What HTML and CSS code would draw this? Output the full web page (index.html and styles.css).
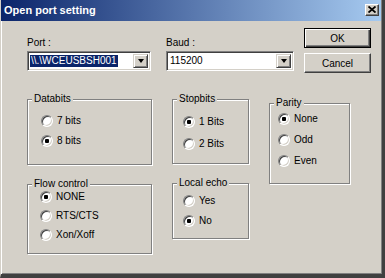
FILE: index.html
```html
<!DOCTYPE html>
<html lang="en">
<head>
  <meta charset="UTF-8" />
  <title>Open port setting</title>
  <link rel="stylesheet" href="styles.css">
</head>
<body>
  <div class="window">
    <div class="titlebar">
      <span class="title">Open port setting</span>
      <button class="close" aria-label="Close">
        <svg width="8" height="7" viewBox="0 0 8 7"><path d="M0.5 0.5 L7.5 6.5 M7.5 0.5 L0.5 6.5" stroke="#000" stroke-width="1.8" fill="none"/></svg>
      </button>
    </div>

    <div class="content">
      <div class="top-row">
        <div class="field field-port">
          <label class="field-label">Port :</label>
          <div class="combo">
            <span class="combo-value selected">\\.\WCEUSBSH001</span>
            <span class="combo-btn"><span class="arrow"></span></span>
          </div>
        </div>
        <div class="field field-baud">
          <label class="field-label">Baud :</label>
          <div class="combo">
            <span class="combo-value">115200</span>
            <span class="combo-btn"><span class="arrow"></span></span>
          </div>
        </div>
        <div class="buttons">
          <button class="btn btn-default">OK</button>
          <button class="btn">Cancel</button>
        </div>
      </div>

      <div class="groups">
        <div class="col col-1">
          <div class="group group-databits">
            <span class="group-title">Databits</span>
            <div class="options">
              <label class="radio"><input type="radio" name="databits" /><span>7 bits</span></label>
              <label class="radio"><input type="radio" name="databits" checked /><span>8 bits</span></label>
            </div>
          </div>
          <div class="group group-flow">
            <span class="group-title">Flow control</span>
            <div class="options">
              <label class="radio"><input type="radio" name="flow" checked /><span>NONE</span></label>
              <label class="radio"><input type="radio" name="flow" /><span>RTS/CTS</span></label>
              <label class="radio"><input type="radio" name="flow" /><span>Xon/Xoff</span></label>
            </div>
          </div>
        </div>

        <div class="col col-2">
          <div class="group group-stopbits">
            <span class="group-title">Stopbits</span>
            <div class="options">
              <label class="radio"><input type="radio" name="stopbits" checked /><span>1 Bits</span></label>
              <label class="radio"><input type="radio" name="stopbits" /><span>2 Bits</span></label>
            </div>
          </div>
          <div class="group group-echo">
            <span class="group-title">Local echo</span>
            <div class="options">
              <label class="radio"><input type="radio" name="echo" /><span>Yes</span></label>
              <label class="radio"><input type="radio" name="echo" checked /><span>No</span></label>
            </div>
          </div>
        </div>

        <div class="col col-3">
          <div class="group group-parity">
            <span class="group-title">Parity</span>
            <div class="options">
              <label class="radio"><input type="radio" name="parity" checked /><span>None</span></label>
              <label class="radio"><input type="radio" name="parity" /><span>Odd</span></label>
              <label class="radio"><input type="radio" name="parity" /><span>Even</span></label>
            </div>
          </div>
        </div>
      </div>
    </div>
  </div>
</body>
</html>
```

FILE: styles.css
```css
:root {
  --face: #d4d0c8;
  --shadow: #808080;
  --dark: #404040;
  --light: #fff;
  --select: #0a246a;
}

* {
  box-sizing: border-box;
}

html, body {
  margin: 0;
  height: 100%;
}

body {
  font-family: "Liberation Sans", Arial, sans-serif;
  font-size: 10px;
  color: #000;
  background: var(--face);
}

/* Window frame */

.window {
  width: 385px;
  height: 278px;
  background: var(--face);
  border-left: 1px solid var(--face);
  border-right: 3px solid var(--dark);
  border-bottom: 4px solid var(--dark);
  box-shadow: inset 1px 0 0 var(--light), inset -1px -1px 0 var(--shadow);
  display: flex;
  flex-direction: column;
}

.titlebar {
  height: 21px;
  margin-right: 1px;
  padding: 0 2px 0 3px;
  display: flex;
  justify-content: space-between;
  align-items: center;
  background: linear-gradient(90deg, #0a246a 0%, #a6caf0 100%);
  flex-shrink: 0;
}

.title {
  color: #fff;
  font-weight: bold;
  font-size: 11px;
  line-height: 13px;
  margin-top: -1px;
}

.close {
  width: 14px;
  height: 12px;
  padding: 0;
  margin-top: -2px;
  display: flex;
  align-items: center;
  justify-content: center;
  background: var(--face);
  border: 1px solid;
  border-color: var(--light) var(--dark) var(--dark) var(--light);
  box-shadow: inset -1px -1px 0 var(--shadow);
}

/* Content */

.content {
  flex: 1;
  padding: 7px 0 0 26px;
}

.top-row {
  display: flex;
}

.field {
  padding-top: 9px;
  display: flex;
  flex-direction: column;
}

.field-port {
  width: 124px;
}

.field-baud {
  width: 128px;
  margin-left: 15px;
}

.field-label {
  line-height: 12px;
  margin-bottom: 2px;
}

.combo {
  height: 20px;
  display: flex;
  justify-content: space-between;
  background: #fff;
  border: 1px solid;
  border-color: var(--shadow) var(--light) var(--light) var(--shadow);
  box-shadow: inset 1px 1px 0 var(--dark), inset -1px -1px 0 var(--face);
  padding: 2px;
}

.combo-value {
  line-height: 12px;
  padding: 0 1px;
  margin-top: 1px;
  align-self: flex-start;
  white-space: nowrap;
}

.combo-value.selected {
  background: var(--select);
  color: #fff;
}

.combo-btn {
  width: 15px;
  height: 14px;
  margin-top: 0;
  display: flex;
  align-items: center;
  justify-content: center;
  background: var(--face);
  border: 1px solid;
  border-color: var(--face) var(--dark) var(--dark) var(--face);
  box-shadow: inset 1px 1px 0 var(--light), inset -1px -1px 0 var(--shadow);
}

.arrow {
  width: 0;
  height: 0;
  border-left: 3.5px solid transparent;
  border-right: 3.5px solid transparent;
  border-top: 4px solid #000;
}

.buttons {
  margin-left: 10px;
  display: flex;
  flex-direction: column;
  gap: 5px;
}

.btn {
  width: 67px;
  height: 20px;
  padding: 0;
  font-family: inherit;
  font-size: 10px;
  color: #000;
  background: var(--face);
  border: 1px solid;
  border-color: var(--light) var(--dark) var(--dark) var(--light);
  box-shadow: inset -1px -1px 0 var(--shadow);
}

.btn-default {
  border: 1px solid #000;
  box-shadow: inset 1px 1px 0 var(--light), inset -1px -1px 0 var(--dark), inset -2px -2px 0 var(--shadow);
}

/* Group boxes */

.groups {
  margin-top: 26px;
  display: flex;
  gap: 20px;
}

.col {
  display: flex;
  flex-direction: column;
  gap: 19px;
}

.col-1 { width: 125px; }
.col-2 { width: 77px; }
.col-3 { width: 81px; margin-top: 4px; }

.group {
  border: 1px solid var(--shadow);
  box-shadow: inset 1px 1px 0 var(--light), 1px 1px 0 var(--light);
  display: flex;
  flex-direction: column;
}

.group-title {
  align-self: flex-start;
  margin: -7px 0 0 4px;
  padding: 0 2px;
  line-height: 12px;
  background: var(--face);
}

.options {
  display: flex;
  flex-direction: column;
}

.group-databits { height: 66px; }
.group-databits .options { padding: 9px 0 0 13px; gap: 6px; }

.group-flow { height: 70px; }
.group-flow .options { padding: 0 0 0 12px; gap: 5px; }

.group-stopbits { height: 65px; }
.group-stopbits .options { padding: 10px 0 0 10px; gap: 8px; }

.group-echo { height: 56px; }
.group-echo .options { padding: 5px 0 0 10px; gap: 6px; }

.group-parity { height: 81px; }
.group-parity .options { padding: 3px 0 0 8px; gap: 7px; }

/* Radio buttons */

.radio {
  height: 14px;
  display: flex;
  align-items: center;
  gap: 4px;
  line-height: 12px;
}

.radio input {
  appearance: none;
  -webkit-appearance: none;
  width: 12px;
  height: 12px;
  margin: 0;
  flex-shrink: 0;
  border-radius: 50%;
  background: #fff;
  border: 1px solid;
  border-color: var(--shadow) var(--light) var(--light) var(--shadow);
  box-shadow: inset 1px 1px 0 var(--dark), inset -1px -1px 0 var(--face);
}

.radio input:checked {
  background: radial-gradient(circle at 50% 50%, #000 0 2px, #fff 2.5px);
}
```
